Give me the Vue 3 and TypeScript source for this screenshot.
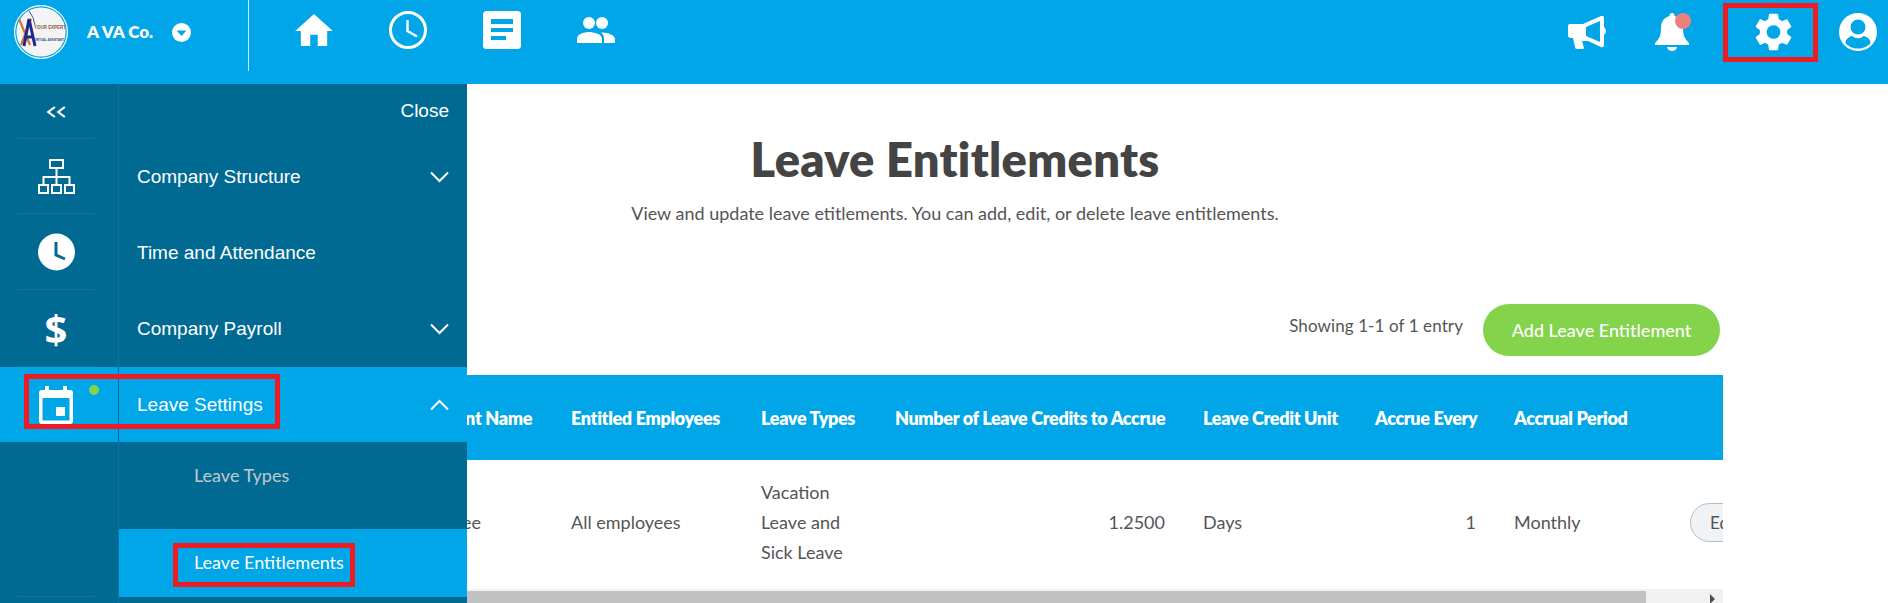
<script setup lang="ts">
const columns = [
  { label: 'Entitlement Name', width: 365 },
  { label: 'Entitled Employees', width: 190 },
  { label: 'Leave Types', width: 134 },
  { label: 'Number of Leave Credits to Accrue', width: 308 },
  { label: 'Leave Credit Unit', width: 172 },
  { label: 'Accrue Every', width: 139 },
  { label: 'Accrual Period', width: 176 },
  { label: '', width: 120 },
]
</script>

<template>
  <div class="page">
    <header class="topbar">
      <svg class="logo" viewBox="0 0 54 54">
        <circle cx="27" cy="27" r="26.4" fill="none" stroke="#fff" stroke-width="1.2" />
        <circle cx="27" cy="27" r="24.6" fill="#f4f4f4" />
        <path d="M5 14 L16 40 M17 14 L7 40" stroke="#e2702a" stroke-width="2.2" fill="none" />
        <path d="M10 41 L15 14 L21 41 M12 32 H19" stroke="#1c2a8c" stroke-width="3" fill="none" />
        <path d="M15 6 Q20 12 21 20" stroke="#1c2a8c" stroke-width="0.8" fill="none" />
        <text x="20" y="24" class="logo-top" textLength="32" lengthAdjust="spacingAndGlyphs">YOUR EXPERT</text>
        <text x="20" y="36" class="logo-sub" textLength="30" lengthAdjust="spacingAndGlyphs">VIRTUAL ASSISTANT</text>
      </svg>
      <span class="company">A VA Co.</span>
      <svg class="caret" viewBox="0 0 19 19">
        <circle cx="9.5" cy="9.5" r="9.5" fill="#fff" />
        <path d="M4.5 7.5 H14.5 L9.5 13 Z" fill="#00a6e7" />
      </svg>
      <div class="divider"></div>
      <nav class="nav">
        <svg class="home" viewBox="2 3 20 17"><path d="M10 20v-6h4v6h5v-8h3L12 3 2 12h3v8z" fill="#fff" /></svg>
        <svg class="ico38" viewBox="0 0 38 38">
          <circle cx="19" cy="19" r="17.5" fill="none" stroke="#fff" stroke-width="3" />
          <path d="M18.5 9 V20 L28 25.5" fill="none" stroke="#fff" stroke-width="2.4" />
        </svg>
        <svg class="ico38" viewBox="0 0 38 38">
          <rect width="38" height="38" rx="3.5" fill="#fff" />
          <path d="M8 8 H30 V13 H8 Z M8 17 H30 V21 H8 Z M8 25 H23 V29 H8 Z" fill="#00a6e7" />
        </svg>
        <svg class="people" viewBox="0 0 38 26">
          <circle cx="12" cy="6" r="6" fill="#fff" />
          <circle cx="25" cy="6" r="6" fill="#fff" />
          <path d="M0 26 V22 C0 17 7 15 12 15 C17 15 25 17 25 22 V26 Z" fill="#fff" />
          <path d="M27 26 V21 C27 19 26 17 24 15.5 C30 15 38 18 38 22 V26 Z" fill="#fff" />
        </svg>
      </nav>
      <div class="actions">
        <svg class="mega" viewBox="0 0 38 34">
          <path d="M2 9 H15 L33 1 Q36 0 36 3 V12 Q38 14 38 16 Q38 18 36 20 V30 Q36 33 33 32 L20 26 H14 L16 33 Q16 34 14 34 H9 Q7 34 7 32 L5 23 H3 Q0 23 0 20 V11 Q0 9 2 9 Z M18 12 V21 L32 27 V6 Z" fill="#fff" fill-rule="evenodd" />
        </svg>
        <div class="bell">
          <svg viewBox="0 0 34 38">
            <path d="M17 0 Q19.5 0 19.5 3 C25 4.500 28 9 28 15 C28 23 30 26 34 30 V32 H0 V30 C4 26 6 23 6 15 C6 9 9 4.500 14.500 3 Q14.500 0 17 0 Z M12 34 H22 Q21 38 17 38 Q13 38 12 34 Z" fill="#fff" />
          </svg>
          <span class="bell-dot"></span>
        </div>
        <svg class="gear" viewBox="2.4 2 19.2 20">
          <path d="M19.14 12.94c.04-.3.06-.61.06-.94 0-.32-.02-.64-.07-.94l2.03-1.58c.18-.14.23-.41.12-.61l-1.92-3.32c-.12-.22-.37-.29-.59-.22l-2.39.96c-.5-.38-1.03-.7-1.62-.94l-.36-2.54c-.04-.24-.24-.41-.48-.41h-3.84c-.24 0-.43.17-.47.41l-.36 2.54c-.59.24-1.13.57-1.62.94l-2.39-.96c-.22-.08-.47 0-.59.22L2.74 8.87c-.12.21-.08.47.12.61l2.03 1.58c-.05.3-.09.63-.09.94s.02.64.07.94l-2.03 1.58c-.18.14-.23.41-.12.61l1.92 3.32c.12.22.37.29.59.22l2.39-.96c.5.38 1.03.7 1.62.94l.36 2.54c.05.24.24.41.48.41h3.84c.24 0 .44-.17.47-.41l.36-2.54c.59-.24 1.13-.56 1.62-.94l2.39.96c.22.08.47 0 .59-.22l1.92-3.32c.12-.22.07-.47-.12-.61l-2.01-1.58zM12 15.6c-1.98 0-3.6-1.62-3.6-3.6s1.62-3.6 3.6-3.6 3.6 1.62 3.6 3.6-1.62 3.6-3.6 3.6z" fill="#fff" />
        </svg>
        <svg class="ico38" viewBox="0 0 38 38">
          <circle cx="19" cy="19" r="19" fill="#fff" />
          <circle cx="19" cy="14" r="7.500" fill="#00a6e7" />
          <path d="M6.500 30 C6.500 26 10 23.500 13.500 23 C16 26 22 26 24.500 23 C28 23.500 31.500 26 31.500 30 C28 34 24 35.500 19 35.500 C14 35.500 10 34 6.500 30 Z" fill="#00a6e7" />
        </svg>
      </div>
    </header>

    <main class="main">
      <h1 class="title">Leave Entitlements</h1>
      <p class="subtitle">View and update leave etitlements. You can add, edit, or delete leave entitlements.</p>
      <div class="toolbar">
        <span class="count">Showing 1-1 of 1 entry</span>
        <button type="button" class="add">Add Leave Entitlement</button>
      </div>
      <div class="table-wrap">
        <table>
          <colgroup>
            <col v-for="c in columns" :key="c.label" :style="{ width: c.width + 'px' }" />
          </colgroup>
          <thead>
            <tr>
              <th v-for="c in columns" :key="c.label">{{ c.label }}</th>
            </tr>
          </thead>
          <tbody>
            <tr>
              <td>Employee</td>
              <td>All employees</td>
              <td>Vacation Leave and Sick Leave</td>
              <td class="num">1.2500</td>
              <td>Days</td>
              <td class="num">1</td>
              <td>Monthly</td>
              <td><button type="button" class="edit">Edit</button></td>
            </tr>
          </tbody>
        </table>
      </div>
      <div class="scrollbar">
        <div class="thumb"></div>
        <span class="arrow"></span>
      </div>
    </main>

    <aside class="sidebar">
      <div class="row row-head">
        <div class="rail rail-sep">
          <svg class="collapse" viewBox="0 0 19 12" preserveAspectRatio="none">
            <path d="M8 1 L2 6 L8 11 M17 1 L11 6 L17 11" fill="none" stroke="#fff" stroke-width="2" />
          </svg>
        </div>
        <div class="cell close">Close</div>
      </div>
      <div class="row row-item">
        <div class="rail rail-sep">
          <svg class="org" viewBox="0 0 37 35">
            <g fill="none" stroke="#fff" stroke-width="2">
              <rect x="12" y="1" width="13" height="8" />
              <rect x="1" y="26" width="9" height="8" />
              <rect x="14" y="26" width="9" height="8" />
              <rect x="27" y="26" width="9" height="8" />
              <path d="M18.500 9 V26 M5.500 26 V18 H31.500 V26" />
            </g>
          </svg>
        </div>
        <div class="cell">
          <span>Company Structure</span>
          <svg class="chev" viewBox="0 0 19 12"><path d="M1 1.500 L9.500 10 L18 1.500" fill="none" stroke="#fff" stroke-width="2" /></svg>
        </div>
      </div>
      <div class="row row-item">
        <div class="rail rail-sep">
          <svg class="ico37" viewBox="0 0 37 38">
            <circle cx="18.500" cy="19" r="18.500" fill="#fff" />
            <path d="M18 9 V22 L27 26" fill="none" stroke="#006a93" stroke-width="3" />
          </svg>
        </div>
        <div class="cell"><span>Time and Attendance</span></div>
      </div>
      <div class="row row-item">
        <div class="rail rail-sep">
          <span class="dollar">$</span>
        </div>
        <div class="cell">
          <span>Company Payroll</span>
          <svg class="chev" viewBox="0 0 19 12"><path d="M1 1.500 L9.500 10 L18 1.500" fill="none" stroke="#fff" stroke-width="2" /></svg>
        </div>
      </div>
      <div class="row row-item active">
        <div class="rail">
          <svg class="cal" viewBox="0 0 34 38">
            <path d="M6 0 H10 V4 H24 V0 H28 V4 H31 Q34 4 34 7 V35 Q34 38 31 38 H3 Q0 38 0 35 V7 Q0 4 3 4 H6 Z M3.500 12 V34.500 H30.500 V12 Z" fill="#fff" fill-rule="evenodd" />
            <rect x="17" y="21" width="9" height="9" fill="#fff" />
          </svg>
          <span class="dot"></span>
        </div>
        <div class="cell"><span>Leave Settings</span>
          <svg class="chev" viewBox="0 0 19 12"><path d="M1 10.500 L9.500 2 L18 10.500" fill="none" stroke="#fff" stroke-width="2" /></svg>
        </div>
      </div>
      <div class="row row-sub-a">
        <div class="rail"></div>
        <div class="cell sub muted">Leave Types</div>
      </div>
      <div class="row row-sub-b">
        <div class="rail"></div>
        <div class="cell sub selected">Leave Entitlements</div>
      </div>
      <div class="row row-foot">
        <div class="rail rail-top"></div>
        <div class="cell"></div>
      </div>
    </aside>

    <div class="mark mark-gear"></div>
    <div class="mark mark-settings"></div>
    <div class="mark mark-entitle"></div>
  </div>
</template>

<style>
html,
body {
  margin: 0;
  overflow: hidden;
  background: #fff;
}
</style>

<style scoped>
.page {
  position: relative;
  width: 1888px;
  height: 603px;
  overflow: hidden;
  font-family: "Lato", "Open Sans", sans-serif;
  color: #444;
  background: #fff;
}

.topbar {
  display: flex;
  align-items: flex-start;
  height: 84px;
  padding-left: 14px;
  background: #00a6e7;
  box-sizing: border-box;
}

.logo {
  width: 54px;
  height: 54px;
  margin-top: 5px;
}

.logo-top {
  font-family: "Liberation Sans", sans-serif;
  font-size: 5.5px;
  font-weight: 700;
  fill: #8a5a3a;
}

.logo-sub {
  font-family: "Liberation Sans", sans-serif;
  font-size: 3px;
  font-weight: 700;
  fill: #3a4a7c;
}

.company {
  width: 85px;
  margin-left: 19px;
  margin-top: 21px;
  font-size: 17px;
  line-height: 22px;
  font-weight: 800;
  color: #fff;
}

.caret {
  width: 19px;
  height: 19px;
  margin-top: 23px;
}

.divider {
  width: 1px;
  height: 71px;
  margin-left: 57px;
  background: #cfeefb;
}

.nav {
  display: flex;
  align-items: flex-start;
  margin-left: 46px;
}

.home {
  width: 38px;
  height: 32px;
  margin-top: 14px;
}

.ico38 {
  width: 38px;
  height: 38px;
  margin-top: 11px;
  margin-left: 56px;
}

.people {
  width: 38px;
  height: 26px;
  margin-top: 17px;
  margin-left: 56px;
}

.actions {
  display: flex;
  align-items: flex-start;
  margin-left: auto;
  padding-right: 11px;
}

.actions .ico38 {
  margin-top: 13px;
  margin-left: 47px;
}

.mega {
  width: 38px;
  height: 34px;
  margin-top: 15px;
}

.bell {
  position: relative;
  width: 34px;
  height: 38px;
  margin-top: 13px;
  margin-left: 49px;
}

.bell svg {
  display: block;
  width: 34px;
  height: 38px;
}

.bell-dot {
  position: absolute;
  top: 0;
  right: -2px;
  width: 16px;
  height: 16px;
  border-radius: 50%;
  background: #ee7f7f;
}

.gear {
  width: 37px;
  height: 38px;
  margin-top: 13px;
  margin-left: 66px;
}

.main {
  width: 1536px;
  margin-left: 187px;
}

.title {
  margin: 49px 0 0;
  font-size: 47px;
  line-height: 52px;
  font-weight: 800;
  text-align: center;
  color: #444;
  letter-spacing: 0.3px;
}

.subtitle {
  margin: 16px 0 0;
  font-size: 18px;
  line-height: 24px;
  text-align: center;
  color: #555;
}

.toolbar {
  display: flex;
  align-items: flex-start;
  justify-content: flex-end;
  gap: 20px;
  margin-top: 79px;
  padding-right: 3px;
}

.count {
  margin-top: 10px;
  font-size: 17px;
  line-height: 24px;
  letter-spacing: 0.1px;
  color: #555;
}

.add {
  width: 237px;
  height: 52px;
  border: 0;
  border-radius: 26px;
  background: #83d44b;
  color: #fff;
  font-family: inherit;
  font-size: 18px;
  font-weight: 500;
}

.table-wrap {
  margin-top: 19px;
  overflow: hidden;
}

table {
  width: 1604px;
  table-layout: fixed;
  border-collapse: collapse;
}

th {
  height: 85px;
  padding: 0 19px;
  background: #00a6e7;
  color: #fff;
  font-size: 18px;
  font-weight: 800;
  text-align: left;
  white-space: nowrap;
  letter-spacing: -0.35px;
}

td {
  height: 129px;
  padding: 0 19px 5px;
  font-size: 18px;
  line-height: 30px;
  color: #555;
  box-sizing: border-box;
}

th:first-child {
  padding-right: 20px;
  text-align: right;
}

td:first-child {
  padding-right: 71px;
  text-align: right;
}

td.num {
  text-align: right;
}

.edit {
  width: 80px;
  height: 39px;
  padding: 0 0 0 19px;
  border: 1px solid #b8bcc0;
  border-radius: 20px;
  background: #f0f3f6;
  color: #555;
  font-family: inherit;
  font-size: 17px;
  text-align: left;
}

.scrollbar {
  position: relative;
  height: 14px;
  padding-top: 2px;
  background: #f1f1f1;
  box-sizing: border-box;
}

.thumb {
  width: 1459px;
  height: 12px;
  background: #c1c1c1;
}

.arrow {
  position: absolute;
  right: 8px;
  top: 5px;
  width: 0;
  height: 0;
  border-left: 5px solid #505050;
  border-top: 5px solid transparent;
  border-bottom: 5px solid transparent;
}

/* the settings panel lies over the page content */
.sidebar {
  position: absolute;
  left: 0;
  top: 84px;
  width: 467px;
  height: 519px;
  display: flex;
  flex-direction: column;
  background: #006a93;
  color: #fff;
  font-family: "Liberation Sans", Arial, sans-serif;
  font-size: 19px;
}

.row {
  display: flex;
  flex: none;
}

.row-head {
  height: 55px;
}

.row-item {
  height: 76px;
}

.row-item:nth-child(2) {
  height: 75px;
}

.row-item:nth-child(4) {
  height: 77px;
}

.row-item.active {
  height: 75px;
}

.row-sub-a {
  height: 87px;
}

.row-sub-b {
  height: 68px;
}

.row-foot {
  flex: 1;
}

.active {
  background: #00a6e7;
}

.rail {
  position: relative;
  display: flex;
  align-items: center;
  justify-content: center;
  flex: none;
  width: 119px;
  padding-right: 6px;
  border-right: 1px solid #0a76a3;
  box-sizing: border-box;
}

.rail-sep::after,
.rail-top::after {
  content: "";
  position: absolute;
  left: 18px;
  width: 76px;
  height: 1px;
  background: #0a76a3;
}

.rail-sep::after {
  bottom: 0;
}

.rail-top::after {
  top: -1px;
}

.active .rail {
  border-right-color: #006a93;
}

.cell {
  display: flex;
  align-items: center;
  justify-content: space-between;
  flex: 1;
  padding: 1px 18px 0;
  white-space: nowrap;
}

.close {
  justify-content: flex-end;
  padding-top: 0;
  padding-bottom: 1px;
}

.collapse {
  width: 21px;
  height: 12px;
}

.org {
  width: 37px;
  height: 35px;
}

.ico37 {
  width: 37px;
  height: 38px;
}

.dollar {
  font-family: "Open Sans", sans-serif;
  font-size: 40px;
  font-weight: 700;
  line-height: 38px;
}

.cal {
  width: 34px;
  height: 38px;
}

.dot {
  position: absolute;
  left: 89px;
  top: 18px;
  width: 10px;
  height: 10px;
  border-radius: 50%;
  background: #83d44b;
}

.chev {
  width: 19px;
  height: 12px;
}

.sub {
  padding-left: 75px;
  font-family: "Lato", "Open Sans", sans-serif;
  font-size: 18px;
}

.muted {
  padding-top: 0;
  padding-bottom: 22px;
  color: #c3c9cc;
}

.selected {
  padding-top: 0;
  padding-bottom: 2px;
  background: #00a6e7;
  color: #fff;
}

/* red annotation boxes drawn on top of the screenshot */
.mark {
  position: absolute;
  border: 5px solid #ed1c24;
  box-sizing: border-box;
}

.mark-gear {
  left: 1723px;
  top: 3px;
  width: 95px;
  height: 59px;
}

.mark-settings {
  left: 24px;
  top: 374px;
  width: 256px;
  height: 55px;
}

.mark-entitle {
  left: 173px;
  top: 543px;
  width: 182px;
  height: 44px;
}
</style>
